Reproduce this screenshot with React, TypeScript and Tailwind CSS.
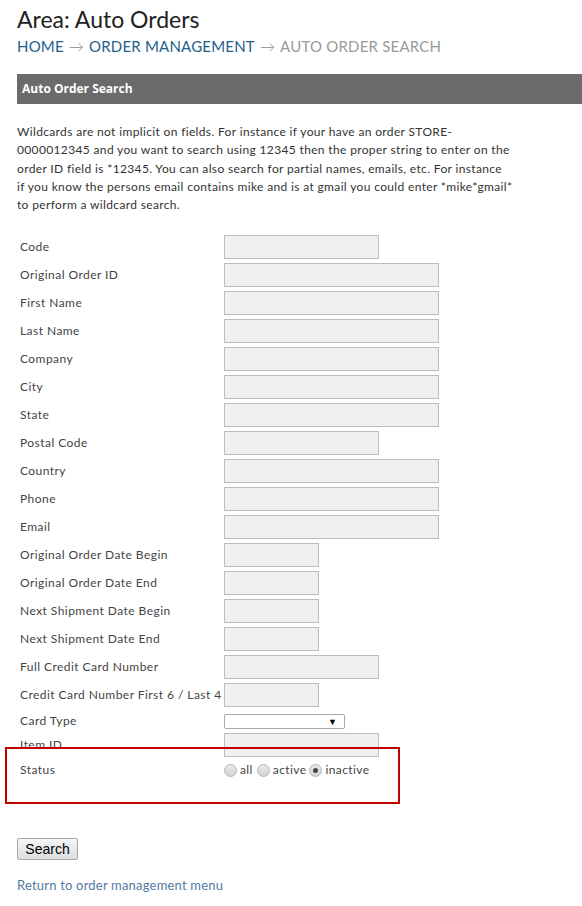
import React from "react";

type Field = { label: string; w: number };

const fields: Field[] = [
  { label: "Code", w: 155 },
  { label: "Original Order ID", w: 215 },
  { label: "First Name", w: 215 },
  { label: "Last Name", w: 215 },
  { label: "Company", w: 215 },
  { label: "City", w: 215 },
  { label: "State", w: 215 },
  { label: "Postal Code", w: 155 },
  { label: "Country", w: 215 },
  { label: "Phone", w: 215 },
  { label: "Email", w: 215 },
  { label: "Original Order Date Begin", w: 95 },
  { label: "Original Order Date End", w: 95 },
  { label: "Next Shipment Date Begin", w: 95 },
  { label: "Next Shipment Date End", w: 95 },
  { label: "Full Credit Card Number", w: 155 },
  { label: "Credit Card Number First 6 / Last 4", w: 95 },
];

const Label = ({ children }: { children: React.ReactNode }) => (
  <div className="w-[207px] shrink-0 pl-[3px] text-[12px] tracking-[0.45px] text-[#444] whitespace-nowrap">{children}</div>
);

const TextBox = ({ w }: { w: number }) => (
  <div
    className="h-[24px] border border-[#bdbdbd] bg-[#f0f0f0]"
    style={{ width: w }}
  />
);

const Radio = ({ checked }: { checked?: boolean }) => (
  <span className="relative inline-flex h-[13px] w-[13px] items-center justify-center rounded-full border border-[#b5b5b5] bg-gradient-to-b from-[#e8e8e8] to-[#d4d4d4]">
    {checked && <span className="h-[5px] w-[5px] rounded-full bg-[#444]" />}
  </span>
);

export default function App() {
  return (
    <div className="relative min-h-[906px] bg-white pl-[17px] font-['Lato','Open_Sans',sans-serif] text-[#333]">
      <h1 className="pt-[5px] text-[23px] leading-[28px] text-[#222]">Area: Auto Orders</h1>
      <div className="mt-[3px] flex items-center text-[15px] leading-[20px] tracking-[0.2px] uppercase">
        <span className="text-[#245f8c]">Home</span>
        <span className="mx-[5px] text-[15px] font-light text-[#8a8a8a]">→</span>
        <span className="text-[#245f8c]">Order Management</span>
        <span className="mx-[5px] text-[15px] font-light text-[#8a8a8a]">→</span>
        <span className="text-[#9a9a9a]">Auto Order Search</span>
      </div>

      <div className="mt-[18px] flex h-[30px] items-center bg-[#6b6b6b] pl-[5px] font-['Open_Sans',sans-serif] text-[12px] font-bold text-white">
        Auto Order Search
      </div>

      <p className="mt-[19px] w-[540px] text-[12px] leading-[18.3px] tracking-[0.35px] text-[#333]">
        Wildcards are not implicit on fields. For instance if your have an order STORE-
        <br />
        0000012345 and you want to search using 12345 then the proper string to enter on the
        <br />
        order ID field is *12345. You can also search for partial names, emails, etc. For instance
        <br />
        if you know the persons email contains mike and is at gmail you could enter *mike*gmail*
        <br />
        to perform a wildcard search.
      </p>

      <div className="mt-[19px] flex flex-col">
        {fields.map((f) => (
          <div key={f.label} className="flex h-[28px] items-center">
            <Label>{f.label}</Label>
            <TextBox w={f.w} />
          </div>
        ))}
        <div className="flex h-[24px] items-center">
          <Label>Card Type</Label>
          <div className="relative h-[15px] w-[121px] rounded-[2px] border border-[#a9a9a9] bg-white">
            <span className="absolute right-[7px] top-[-1px] text-[9px] leading-[15px] text-black">▼</span>
          </div>
        </div>
        <div className="flex h-[24px] items-center">
          <Label>Item ID</Label>
          <TextBox w={155} />
        </div>
        <div className="flex h-[26px] items-center">
          <Label>Status</Label>
          <div className="flex items-center text-[12px] tracking-[0.4px] text-[#444]">
            <Radio />
            <span className="ml-[3px] mr-[4px]">all</span>
            <Radio />
            <span className="ml-[3px] mr-[3px]">active</span>
            <Radio checked />
            <span className="ml-[3px]">inactive</span>
          </div>
        </div>
      </div>

      <button className="mt-[55px] block h-[22px] w-[61px] rounded-[2px] border border-[#a8a8a8] bg-gradient-to-b from-[#f6f6f6] to-[#dedede] font-['Liberation_Sans',Arial,sans-serif] text-[14px] leading-[20px] text-black">
        Search
      </button>

      <a href="#" className="mt-[16px] block text-[13px] tracking-[0.2px] text-[#55799f]">
        Return to order management menu
      </a>

      <div className="absolute left-[5px] top-[747px] h-[57px] w-[395px] border-2 border-[#c00000]" />
    </div>
  );
}
